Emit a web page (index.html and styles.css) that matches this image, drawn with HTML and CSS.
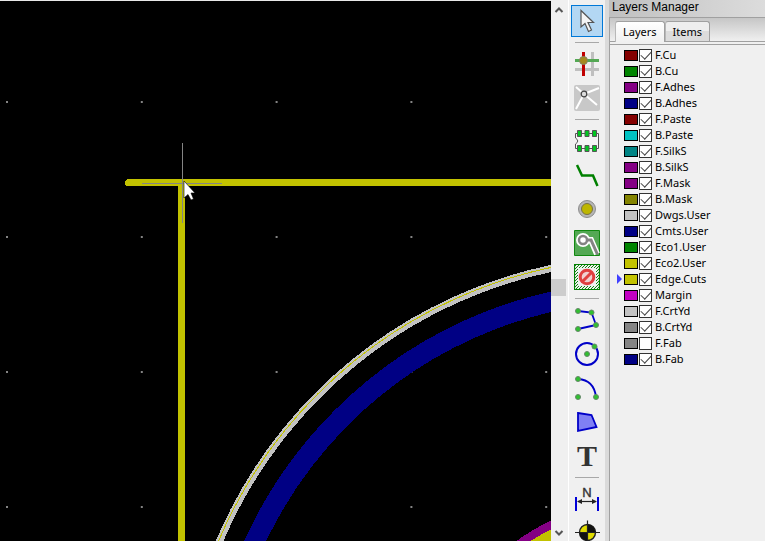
FILE: index.html
```html
<!DOCTYPE html>
<html lang="en">
<head>
<meta charset="utf-8">
<title>Board editor</title>
<link rel="stylesheet" href="styles.css">
</head>
<body>
<div class="app">
  <main class="board">
    <svg class="drawing" viewBox="0 0 551 540" preserveAspectRatio="xMinYMin slice" role="img" aria-label="Board drawing" shape-rendering="crispEdges">
      <defs>
        <pattern id="dots" x="6" y="100" width="134.8" height="135" patternUnits="userSpaceOnUse"><rect width="2" height="2" fill="#848484"/></pattern>
      </defs>
      <rect width="551" height="540" fill="#000"/>
      <rect width="551" height="540" fill="url(#dots)"/>
      <g fill="none">
        <circle cx="647" cy="722" r="432" stroke="#000084" stroke-width="20"/>
        <circle cx="647" cy="722" r="464.5" stroke="#c2c2c2" stroke-width="7"/>
        <circle cx="647" cy="722" r="465.5" stroke="#c2c200" stroke-width="1"/>
        <circle cx="647" cy="722" r="220" stroke="#840084" stroke-width="8" fill="#c2c200"/>
        <path d="M128.500 181.500H551M181.500 181.500V540" stroke="#c2c200" stroke-width="7" stroke-linecap="round"/>
        <path d="M142 182.500H222M182.500 142V222" stroke="#848484"/>
      </g>
      <path d="M184 180V197L188 193.500L191 199L193.500 198L191 192H195Z" fill="#fff" stroke="#000" stroke-width=".6" shape-rendering="auto"/>
    </svg>
  </main>

  <div class="scrollbar">
    <button class="step" aria-label="Scroll up"><svg viewBox="0 0 10 8"><path d="M1.500 6L5 2.500L8.500 6"/></svg></button>
    <div class="track before"></div>
    <div class="thumb"></div>
    <div class="track after"></div>
    <button class="step" aria-label="Scroll down"><svg viewBox="0 0 10 8"><path d="M1.500 2L5 5.500L8.500 2"/></svg></button>
  </div>

  <nav class="tools" aria-label="Drawing tools">
    <button class="tool active" aria-label="Select"><svg viewBox="0 0 26 26"><path d="M7 2.500V19L11 15.500L14.500 23.500L17.500 22L14 14.500H19.500Z" fill="#f4f4f4" stroke="#555" stroke-width="1.200"/></svg></button>
    <hr>
    <button class="tool" aria-label="Highlight net"><svg viewBox="0 0 26 26"><path d="M18.500 1V25M1 18.500H25" stroke="#bfbfbf" stroke-width="3"/><path d="M9.500 1V25" stroke="#c00000" stroke-width="3"/><path d="M1 9.500H25" stroke="#54a854" stroke-width="3"/><circle cx="9.500" cy="9.500" r="4" fill="#a58a20" stroke="#848468"/></svg></button>
    <button class="tool" aria-label="Local ratsnest"><svg viewBox="0 0 26 26"><rect width="26" height="26" rx="2" fill="#c8c8c8"/><path d="M10 9L2 2M10 9L25 3M10 9L23 20M10 9L2 24" stroke="#fff" stroke-width="2"/><circle cx="10" cy="9" r="2.800" fill="#ddd" stroke="#444" stroke-width="1.200"/></svg></button>
    <hr>
    <button class="tool" aria-label="Add footprint"><svg viewBox="0 0 26 26"><path d="M1.500 5.500H24.500V20.500H1.500V16Q6 13 1.500 10Z" fill="#f5f5f5" stroke="#555"/><g fill="#00c820" stroke="#555"><path d="M3.500 2.500h4v6h-4zM11 2.500h4v6h-4zM18.500 2.500h4v6h-4zM3.500 17.500h4v6h-4zM11 17.500h4v6h-4zM18.500 17.500h4v6h-4z"/></g></svg></button>
    <button class="tool" aria-label="Route track"><svg viewBox="0 0 26 26"><path d="M3 3L8 13.500H19L23.500 24" fill="none" stroke="#008000" stroke-width="2.500"/></svg></button>
    <button class="tool" aria-label="Add via"><svg viewBox="0 0 26 26"><circle cx="13" cy="13" r="8.500" fill="#b5b5b5" stroke="#8c8c8c"/><circle cx="13" cy="13" r="5.500" fill="#bdb600" stroke="#777048"/></svg></button>
    <button class="tool" aria-label="Add filled zone"><svg viewBox="0 0 26 26"><path d="M.5 .5H25.500V25.500H.5Z" fill="#54a854" stroke="#108810"/><path d="M9 10H17L23 24" fill="none" stroke="#fff" stroke-width="6"/><circle cx="9" cy="10" r="7" fill="#fff"/><path d="M9 10H17L23.500 24.500" fill="none" stroke="#848484" stroke-width="3"/><circle cx="9" cy="10" r="4" fill="#fff" stroke="#848484" stroke-width="2.500"/></svg></button>
    <button class="tool" aria-label="Add keepout area"><svg viewBox="0 0 26 26"><defs><pattern id="hatch" width="3" height="3" patternUnits="userSpaceOnUse"><path d="M-1 1L1-1M0 3L3 0M2 4L4 2" stroke="#108810"/></pattern></defs><path d="M.5 .5H25.500V25.500H.5Z" fill="url(#hatch)" stroke="#008000" stroke-width="1.200"/><rect x="4" y="4" width="18" height="18" fill="#f0f0f0"/><circle cx="13" cy="13" r="6.800" fill="#f0d0d0" stroke="#e04040" stroke-width="3"/><path d="M8.500 17.500L17.500 8.500" stroke="#e04040" stroke-width="3"/></svg></button>
    <hr>
    <button class="tool" aria-label="Add graphic line"><svg viewBox="0 0 26 26"><path d="M4 4L17.500 5.500L22 18L4 22" fill="none" stroke="#0000c8" stroke-width="1.800"/><g class="nodes"><circle cx="4" cy="4" r="2.500"/><circle cx="17.500" cy="5.500" r="2.500"/><circle cx="22" cy="18" r="2.500"/><circle cx="4" cy="22" r="2.500"/></g></svg></button>
    <button class="tool" aria-label="Add circle"><svg viewBox="0 0 26 26"><circle cx="13" cy="13" r="11" fill="none" stroke="#0000c8" stroke-width="2"/><g class="nodes"><circle cx="13" cy="13" r="2.500"/><circle cx="20.500" cy="5.500" r="2.500"/></g></svg></button>
    <button class="tool" aria-label="Add arc"><svg viewBox="0 0 26 26"><path d="M4 4Q20 5 22 22" fill="none" stroke="#0000c8" stroke-width="1.800"/><g class="nodes"><circle cx="4" cy="4" r="2.500"/><circle cx="4" cy="22" r="2.500"/><circle cx="22" cy="22" r="2.500"/></g></svg></button>
    <button class="tool" aria-label="Add polygon"><svg viewBox="0 0 26 26"><path d="M4 4L17.500 6L22.500 18L4 22Z" fill="#8080f4" stroke="#0000c8" stroke-width="1.800"/></svg></button>
    <button class="tool letter" aria-label="Add text">T</button>
    <hr>
    <button class="tool" aria-label="Add dimension"><svg viewBox="0 0 26 26"><path d="M2 11V25M24 11V25" stroke="#0000d8" stroke-width="2"/><path d="M4 15.500H22" stroke="#222" stroke-width="1.200"/><path d="M3 15.500L8 13V18ZM23 15.500L18 13V18Z" fill="#222"/><text x="13" y="11" text-anchor="middle">N</text></svg></button>
    <button class="tool" aria-label="Add layer target"><svg viewBox="0 0 26 26"><circle cx="13.500" cy="12.500" r="8" fill="#e0dc00" stroke="#222" stroke-width="1.400"/><path d="M13.500 12.500V4.500A8 8 0 0 1 21.500 12.500ZM13.500 12.500V20.500A8 8 0 0 1 5.500 12.500Z" fill="#111"/><path d="M13.500 .5V25M1 12.500H26" stroke="#222" stroke-width="1.200"/></svg></button>
  </nav>

  <aside class="panel">
    <h1>Layers Manager</h1>
    <div class="tabs" role="tablist">
      <button class="tab current" role="tab" aria-selected="true">Layers</button>
      <button class="tab" role="tab" aria-selected="false">Items</button>
    </div>
    <ul class="layers">
      <li><i class="mark"></i><label><span class="swatch red"></span><input type="checkbox" checked>F.Cu</label></li>
      <li><i class="mark"></i><label><span class="swatch green"></span><input type="checkbox" checked>B.Cu</label></li>
      <li><i class="mark"></i><label><span class="swatch purple"></span><input type="checkbox" checked>F.Adhes</label></li>
      <li><i class="mark"></i><label><span class="swatch blue"></span><input type="checkbox" checked>B.Adhes</label></li>
      <li><i class="mark"></i><label><span class="swatch red"></span><input type="checkbox" checked>F.Paste</label></li>
      <li><i class="mark"></i><label><span class="swatch cyan"></span><input type="checkbox" checked>B.Paste</label></li>
      <li><i class="mark"></i><label><span class="swatch teal"></span><input type="checkbox" checked>F.SilkS</label></li>
      <li><i class="mark"></i><label><span class="swatch purple"></span><input type="checkbox" checked>B.SilkS</label></li>
      <li><i class="mark"></i><label><span class="swatch purple"></span><input type="checkbox" checked>F.Mask</label></li>
      <li><i class="mark"></i><label><span class="swatch olive"></span><input type="checkbox" checked>B.Mask</label></li>
      <li><i class="mark"></i><label><span class="swatch silver"></span><input type="checkbox" checked>Dwgs.User</label></li>
      <li><i class="mark"></i><label><span class="swatch blue"></span><input type="checkbox" checked>Cmts.User</label></li>
      <li><i class="mark"></i><label><span class="swatch green"></span><input type="checkbox" checked>Eco1.User</label></li>
      <li><i class="mark"></i><label><span class="swatch yellow"></span><input type="checkbox" checked>Eco2.User</label></li>
      <li><i class="mark selected"></i><label><span class="swatch yellow"></span><input type="checkbox" checked>Edge.Cuts</label></li>
      <li><i class="mark"></i><label><span class="swatch magenta"></span><input type="checkbox" checked>Margin</label></li>
      <li><i class="mark"></i><label><span class="swatch silver"></span><input type="checkbox" checked>F.CrtYd</label></li>
      <li><i class="mark"></i><label><span class="swatch gray"></span><input type="checkbox" checked>B.CrtYd</label></li>
      <li><i class="mark"></i><label><span class="swatch gray"></span><input type="checkbox">F.Fab</label></li>
      <li><i class="mark"></i><label><span class="swatch blue"></span><input type="checkbox" checked>B.Fab</label></li>
    </ul>
  </aside>
</div>
</body>
</html>
```
FILE: styles.css
```css
* {
  box-sizing: border-box;
}

body {
  margin: 0;
  background: #f0f0f0;
  color: #000;
  font: 11px/16px "Noto Sans", "Open Sans", sans-serif;
}

button {
  margin: 0;
  padding: 0;
  border: 0;
  background: none;
  color: inherit;
  font: inherit;
}

.app {
  display: flex;
  height: 100vh;
  overflow: hidden;
}

/* Board canvas */
.board {
  flex: 1;
  min-width: 0;
  border-top: 1px solid #e8e8e8;
  background: #000;
}

.drawing {
  display: block;
  width: 100%;
  height: 100%;
}

/* Scrollbar */
.scrollbar {
  display: flex;
  flex-direction: column;
  width: 18px;
  padding: 2px 2px 0 0;
  border-right: 1px solid #fff;
}

.step {
  display: flex;
  align-items: center;
  justify-content: center;
  height: 16px;
}

.step svg {
  width: 10px;
  height: 8px;
  fill: none;
  stroke: #555;
  stroke-width: 2;
}

.before {
  flex: 261;
}

.after {
  flex: 229;
}

.thumb {
  height: 17px;
  background: #cdcdcd;
}

/* Tool column */
.tools {
  display: flex;
  flex-direction: column;
  align-items: center;
  gap: 2px;
  width: 36px;
  padding-top: 5px;
  overflow: hidden;
}

.tool {
  display: flex;
  flex: none;
  align-items: center;
  justify-content: center;
  width: 32px;
  height: 32px;
}

.tool svg {
  width: 26px;
  height: 26px;
}

.tool.active {
  border: 1px solid #0078d7;
  background: #b3d7f3;
}

.tool text {
  fill: #333;
  stroke: #333;
  stroke-width: .4px;
  font: 13px "Liberation Sans", sans-serif;
}

.tool.letter {
  color: #333;
  font: bold 30px/32px "Liberation Serif", serif;
}

.nodes {
  fill: #30c030;
  stroke: #66866a;
}

.tools hr {
  flex: none;
  width: 24px;
  height: 1px;
  margin: 3px 0;
  border: 0;
  background: #a8a8a8;
}

/* Layers panel */
.panel {
  width: 160px;
  border-left: 4px solid #dadada;
}

.panel h1 {
  height: 17px;
  margin: 0;
  padding-left: 3px;
  background: linear-gradient(90deg, #c0c0c0, #dcdcdc);
  font: 12px/15px "Liberation Sans", sans-serif;
}

.tabs {
  display: flex;
  align-items: flex-end;
  height: 25px;
  padding-left: 5px;
  border-top: 1px solid #a0a0a0;
  border-left: 1px solid #a0a0a0;
  border-bottom: 1px solid #a0a0a0;
  background: linear-gradient(#c6c6c6, #f0f0f0);
}

.tab {
  height: 20px;
  padding: 0 7px;
  border: 1px solid #a0a0a0;
  border-bottom: 0;
  border-left-color: #b8b8b8;
  border-radius: 3px 3px 0 0;
  background: linear-gradient(#eee 50%, #dcdcdc 50%);
}

.tab.current {
  height: 21px;
  margin-bottom: -1px;
  background: linear-gradient(#fff, #f0f0f0);
}

.layers {
  height: 100%;
  margin: 0;
  padding: 2px 0 0 7px;
  border-left: 1px solid #a0a0a0;
  list-style: none;
}

.layers::before {
  display: block;
  height: 1px;
  margin: 0 0 2px -7px;
  background: #a0a0a0;
  content: "";
}

.layers li {
  display: flex;
  align-items: center;
  gap: 2px;
  height: 16px;
}

.layers label {
  display: flex;
  align-items: center;
  white-space: nowrap;
}

.mark {
  width: 5px;
}

.mark.selected {
  height: 10px;
  background: #4040ff;
  clip-path: polygon(0 0, 100% 50%, 0 100%);
}

.swatch {
  width: 14px;
  height: 11px;
  margin-right: 1px;
  border: 1px solid #000;
}

.layers input {
  display: grid;
  place-items: center;
  width: 13px;
  height: 13px;
  margin: 0 3px 0 0;
  border: 1px solid #333;
  background: #fff;
  appearance: none;
}

.layers input:checked::before {
  width: 9px;
  height: 5px;
  border: solid #444;
  border-width: 0 0 1px 1px;
  transform: translateY(-1px) rotate(-47deg);
  content: "";
}

.red { background: #840000; }
.green { background: #008400; }
.purple { background: #840084; }
.blue { background: #000084; }
.cyan { background: #00c2c2; }
.teal { background: #008484; }
.olive { background: #848400; }
.silver { background: #c2c2c2; }
.yellow { background: #c2c200; }
.magenta { background: #c200c2; }
.gray { background: #848484; }
```
